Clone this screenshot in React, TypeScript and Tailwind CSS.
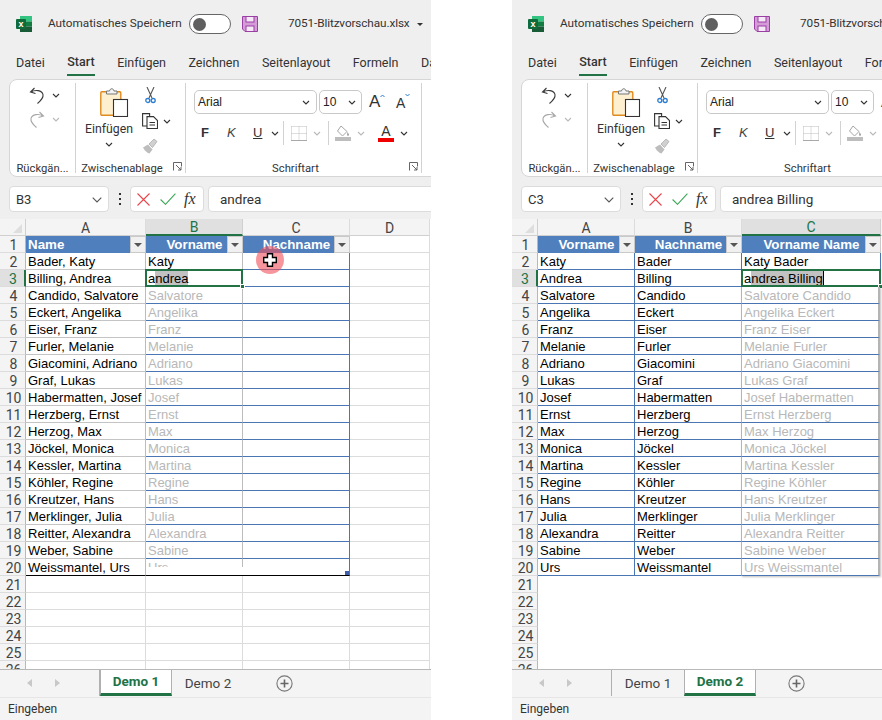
import type { ReactNode } from 'react';

const ui = "font-['Roboto','Noto_Sans',sans-serif]";
const arial = "font-['Liberation_Sans',Arial,sans-serif]";

const people = [
  ['Katy', 'Bader'],
  ['Andrea', 'Billing'],
  ['Salvatore', 'Candido'],
  ['Angelika', 'Eckert'],
  ['Franz', 'Eiser'],
  ['Melanie', 'Furler'],
  ['Adriano', 'Giacomini'],
  ['Lukas', 'Graf'],
  ['Josef', 'Habermatten'],
  ['Ernst', 'Herzberg'],
  ['Max', 'Herzog'],
  ['Monica', 'Jöckel'],
  ['Martina', 'Kessler'],
  ['Regine', 'Köhler'],
  ['Hans', 'Kreutzer'],
  ['Julia', 'Merklinger'],
  ['Alexandra', 'Reitter'],
  ['Sabine', 'Weber'],
  ['Urs', 'Weissmantel'],
];

const emptyRows = [21, 22, 23, 24, 25, 26];

function Chevron({ muted = false, className = '' }: { muted?: boolean; className?: string }) {
  return (
    <svg width="8" height="5" viewBox="0 0 8 5" className={`shrink-0 ${className}`}>
      <path d="M1 1l3 3 3-3" fill="none" stroke={muted ? '#b9b9b9' : '#333'} strokeWidth="1.1" />
    </svg>
  );
}

function ExcelLogo() {
  return (
    <svg width="16" height="16" viewBox="0 0 16 16" className="shrink-0">
      <rect x="4" y="0" width="12" height="5.5" fill="#33c481" />
      <rect x="4" y="5.5" width="6" height="5" fill="#21a366" />
      <rect x="10" y="5.5" width="6" height="5" fill="#107c41" />
      <rect x="4" y="10.5" width="12" height="5.5" fill="#185c37" />
      <rect x="0" y="3" width="10" height="10" rx="1" fill="#0f6b3a" />
      <text x="5" y="11" textAnchor="middle" fontSize="9" fontWeight="700" fill="#fff" fontFamily="Liberation Sans">x</text>
    </svg>
  );
}

function SaveIcon() {
  return (
    <svg width="16" height="16" viewBox="0 0 16 16" className="shrink-0">
      <path d="M.5.5h15v15H3l-2.5-2.5z" fill="#d59ad8" stroke="#9a3fa3" />
      <rect x="4" y=".5" width="8" height="5.5" fill="#f6e9f7" stroke="#9a3fa3" />
      <rect x="4" y="10" width="8" height="5.5" fill="#f6e9f7" stroke="#9a3fa3" />
    </svg>
  );
}

function UndoIcon({ muted = false, flip = false }: { muted?: boolean; flip?: boolean }) {
  const c = muted ? '#a8a8a8' : '#3a3a3a';
  return (
    <svg width="16" height="17" viewBox="0 0 16 17" className={flip ? 'shrink-0 -scale-x-100' : 'shrink-0'}>
      <path d="M5.5 1L1.5 5l5 1.5M2 5c4-2.5 11-2 12 2.5.6 3-2 6-5.5 9" fill="none" stroke={c} strokeWidth="1.1" />
    </svg>
  );
}

function ClipboardIcon() {
  return (
    <svg width="29" height="30" viewBox="0 0 29 30" className="shrink-0">
      <rect x=".8" y="4.8" width="20" height="23.5" rx="1" fill="#fdf0d0" stroke="#e08a1e" strokeWidth="1.4" />
      <path d="M6.5 7V4h3c.5-3 4-3 4.5 0h3v3z" fill="#f3f3f3" stroke="#777" strokeWidth="1" />
      <rect x="13.5" y="12.5" width="14" height="17" fill="#fff" stroke="#333" strokeWidth="1.1" />
    </svg>
  );
}

function ScissorsIcon() {
  return (
    <svg width="11" height="17" viewBox="0 0 11 17" className="shrink-0">
      <path d="M2 0l5 11M9 0L4 11" fill="none" stroke="#555" strokeWidth="1.1" />
      <circle cx="2.8" cy="13.5" r="2" fill="none" stroke="#2b7cd3" strokeWidth="1.3" />
      <circle cx="8.2" cy="13.5" r="2" fill="none" stroke="#2b7cd3" strokeWidth="1.3" />
    </svg>
  );
}

function CopyIcon() {
  return (
    <svg width="16" height="16" viewBox="0 0 16 16" className="shrink-0">
      <path d="M5 13H.6V.6h7V4" fill="none" stroke="#333" strokeWidth="1.1" />
      <path d="M5 3.6h6.5l4 4v8H5z" fill="#fff" stroke="#333" strokeWidth="1.1" />
      <path d="M7.5 9.5h5.5M7.5 12h5.5" stroke="#333" strokeWidth="1" />
    </svg>
  );
}

function BrushIcon() {
  return (
    <svg width="16" height="16" viewBox="0 0 16 16" className="shrink-0">
      <path d="M1 9.5l5-3 4.5 5-3 4c-2-.2-5-3-6.5-6z" fill="#bdbdbd" />
      <path d="M7 6l5-5 3 2.5-4.5 6z" fill="#d0d0d0" stroke="#a5a5a5" strokeWidth=".7" />
    </svg>
  );
}

function Launcher() {
  return (
    <svg width="9" height="9" viewBox="0 0 9 9" className="shrink-0">
      <path d="M.5 8.5v-8h8v4M3 3l5 5M8 5v3H5" fill="none" stroke="#555" strokeWidth=".9" />
    </svg>
  );
}

function BorderIcon() {
  return (
    <svg width="16" height="15" viewBox="0 0 16 15" className="shrink-0">
      <path d="M.5.5h15M.5 7.5h15M.5.5v14M8 .5v14M15.5.5v14" stroke="#bdbdbd" strokeDasharray="1 1" fill="none" />
      <path d="M0 14.5h16" stroke="#a9a9a9" />
    </svg>
  );
}

function FillIcon() {
  return (
    <svg width="16" height="16" viewBox="0 0 16 16" className="shrink-0">
      <path d="M6 1l6 5.5-4.5 4.5-5-5z" fill="#fff" stroke="#a5a5a5" />
      <path d="M12.5 7c1 1.3 1.8 2.2 1.5 3.2-.4 1-2 .8-2-.4 0-.8.3-1.8.5-2.8z" fill="#a5a5a5" />
      <rect x="0" y="12" width="16" height="4" fill="#bdbdbd" />
    </svg>
  );
}

function SizeA({ up }: { up: boolean }) {
  return (
    <div className="flex items-start shrink-0">
      <span className={`${arial} ${up ? 'text-[17px]' : 'text-[14px] mt-[2px]'} leading-[20px] text-[#333]`}>A</span>
      <svg width="5" height="4" viewBox="0 0 5 4" className="mt-[2px]">
        <path d={up ? 'M.5 3l2-2 2 2' : 'M.5 1l2 2 2-2'} fill="none" stroke="#2b7cd3" />
      </svg>
    </div>
  );
}

function GroupLabel({ text, className = '', launcher = false }: { text: string; className?: string; launcher?: boolean }) {
  return (
    <div className={`h-[18px] pt-[9px] flex items-center justify-center relative text-[11.25px] leading-[10px] text-[#333] shrink-0 ${className}`}>
      <span>{text}</span>
      {launcher && (
        <span className="absolute right-[3px] top-[7px]">
          <Launcher />
        </span>
      )}
    </div>
  );
}

function Ribbon() {
  return (
    <div className="h-[98px] ml-[9px] w-[600px] shrink-0 bg-white border border-[#d6d6d6] rounded-l-[8px] py-[3px] flex">
      <div className="w-[66px] shrink-0 border-r border-[#d2d2d2] flex flex-col">
        <div className="flex-1 pl-[19px] pt-[3px]">
          <div className="flex items-center gap-[7px] h-[18px]">
            <UndoIcon />
            <Chevron />
          </div>
          <div className="flex items-center gap-[7px] h-[18px] mt-[6px]">
            <UndoIcon muted flip />
            <Chevron muted />
          </div>
        </div>
        <GroupLabel text="Rückgän..." />
      </div>

      <div className="w-[110px] shrink-0 border-r border-[#d2d2d2] flex flex-col">
        <div className="flex-1 flex pl-[9px] pt-[4px]">
          <div className="w-[48px] flex flex-col items-center shrink-0">
            <div className="ml-[10px]">
              <ClipboardIcon />
            </div>
            <span className="text-[12.25px] leading-[16px] mt-[4px] text-[#333]">Einfügen</span>
            <Chevron className="mt-[5px]" />
          </div>
          <div className="ml-[9px] flex flex-col gap-[9px]">
            <div className="pl-[3px]">
              <ScissorsIcon />
            </div>
            <div className="flex items-center gap-[5px]">
              <CopyIcon />
              <Chevron />
            </div>
            <BrushIcon />
          </div>
        </div>
        <GroupLabel text="Zwischenablage" className="pr-[17px]" launcher />
      </div>

      <div className="w-[236px] shrink-0 border-r border-[#d2d2d2] flex flex-col">
        <div className="flex-1 pl-[8px] pt-[7px]">
          <div className="flex items-center">
            <div className={`w-[123px] h-[24px] border border-[#c9c9c9] rounded-[5px] flex items-center justify-between pl-[3px] pr-[6px] text-[12px] text-[#222] ${arial}`}>
              Arial
              <Chevron />
            </div>
            <div className={`w-[43px] h-[24px] ml-[2px] border border-[#c9c9c9] rounded-[5px] flex items-center justify-between pl-[3px] pr-[5px] text-[12px] text-[#222] ${arial}`}>
              10
              <Chevron />
            </div>
            <div className="ml-[7px] w-[27px]">
              <SizeA up />
            </div>
            <div className="w-[20px]">
              <SizeA up={false} />
            </div>
          </div>
          <div className="flex items-center h-[24px] mt-[7px] pl-[7px]">
            <span className={`w-[26px] text-[13px] font-bold text-[#333] ${arial}`}>F</span>
            <span className={`w-[26px] text-[13px] italic text-[#444] ${arial}`}>K</span>
            <span className={`w-[18px] text-[13px] underline text-[#333] ${arial}`}>U</span>
            <Chevron />
            <span className="w-px h-[24px] bg-[#d2d2d2] ml-[4px] mr-[7px]" />
            <BorderIcon />
            <Chevron muted className="ml-[6px]" />
            <span className="w-px h-[24px] bg-[#d2d2d2] ml-[7px] mr-[6px]" />
            <FillIcon />
            <Chevron muted className="ml-[6px]" />
            <div className="ml-[13px] w-[16px] flex flex-col items-center shrink-0">
              <span className={`text-[14px] leading-[13px] text-[#333] ${arial}`}>A</span>
              <span className="w-[16px] h-[4px] bg-[#f00000]" />
            </div>
            <Chevron className="ml-[6px]" />
          </div>
        </div>
        <GroupLabel text="Schriftart" className="pr-[16px]" launcher />
      </div>
    </div>
  );
}

function FormulaBar({ cell, formula }: { cell: string; formula: string }) {
  return (
    <div className="h-[26px] mt-[9px] mb-[7px] ml-[9px] flex items-stretch shrink-0 w-[700px]">
      <div className="w-[100px] bg-white border border-[#dcdcdc] rounded-[4px] flex items-center justify-between pl-[6px] pr-[6px] pt-[1px] text-[13px] text-[#333]">
        {cell}
        <svg width="10" height="6" viewBox="0 0 10 6">
          <path d="M.7.7L5 5 9.3.7" fill="none" stroke="#555" strokeWidth="1.1" />
        </svg>
      </div>
      <div className="w-[21px] flex flex-col items-center justify-center gap-[3px]">
        <span className="w-[2px] h-[2px] bg-[#333]" />
        <span className="w-[2px] h-[2px] bg-[#333]" />
        <span className="w-[2px] h-[2px] bg-[#333]" />
      </div>
      <div className="w-[74px] bg-white border border-[#dcdcdc] rounded-[4px] flex items-center pl-[6px]">
        <svg width="13" height="13" viewBox="0 0 13 13" className="shrink-0">
          <path d="M.5.5l12 12M12.5.5l-12 12" stroke="#e8474c" strokeWidth="1.1" />
        </svg>
        <svg width="16" height="12" viewBox="0 0 16 12" className="ml-[10px] shrink-0">
          <path d="M.6 6.5L5.5 11.3 15.4.6" fill="none" stroke="#3aa655" strokeWidth="1.1" />
        </svg>
        <span className="ml-[8px] font-['Liberation_Serif',serif] italic text-[16px] text-[#333]">fx</span>
      </div>
      <div className="flex-1 ml-[4px] bg-white border border-[#dcdcdc] rounded-[4px] flex items-center pl-[11px] pt-[1px] text-[13.5px] text-[#333]">
        {formula}
      </div>
    </div>
  );
}

function FilterButton() {
  return (
    <span className="absolute right-0 top-0 w-[16px] h-[17px] bg-[#f0f0f0] border border-[#c9c9c9] flex items-center justify-center">
      <span className="w-0 h-0 border-x-[4px] border-x-transparent border-t-[4px] border-t-[#555]" />
    </span>
  );
}

function ColHead({ label, width, active = false }: { label: string; width: string; active?: boolean }) {
  return (
    <div
      className={`${width} shrink-0 flex items-center justify-center pt-[1px] text-[14px] leading-none border-r ${
        active
          ? 'bg-[#e0e0e0] text-[#217346] border-[#d0d0d0] border-b-2 border-b-[#217346]'
          : 'bg-[#f4f4f4] text-[#444] border-[#dcdcdc] border-b border-b-[#d0d0d0]'
      }`}
    >
      {label}
    </div>
  );
}

function RowHead({ n, active = false }: { n: number; active?: boolean }) {
  return (
    <div
      className={`w-[26px] shrink-0 flex items-center justify-center pl-[2px] pt-[1px] text-[14px] leading-none border-b border-[#dcdcdc] ${
        active
          ? 'bg-[#e0e0e0] text-[#217346] border-r-2 border-r-[#217346]'
          : 'bg-[#f4f4f4] text-[#444] border-r border-r-[#b8b8b8]'
      }`}
    >
      {n}
    </div>
  );
}

function Cell({ className, tone = 'text-black', children }: { className: string; tone?: string; children?: ReactNode }) {
  return (
    <div className={`relative shrink-0 px-[2px] leading-[18px] text-[13px] whitespace-nowrap ${tone} ${arial} ${className}`}>
      {children}
    </div>
  );
}

function HeaderCell({ className, children, filter = true }: { className: string; children: ReactNode; filter?: boolean }) {
  return (
    <div className={`relative shrink-0 bg-[#4f7fbd] text-white font-bold text-[13.33px] leading-[17px] ${arial} ${className}`}>
      {children}
      {filter && <FilterButton />}
    </div>
  );
}

function Corner() {
  return (
    <div className="w-[26px] shrink-0 bg-[#f4f4f4] border-r border-b border-[#d0d0d0] flex items-end justify-end pr-[3px] pb-[2px]">
      <span className="w-0 h-0 border-l-[9px] border-l-transparent border-b-[9px] border-b-[#dedede]" />
    </div>
  );
}

function SelectedEdit({ text, caret = false }: { text: string; caret?: boolean }) {
  return (
    <>
      {text[0]}
      <span className="bg-[#c2c2c2]">{text.slice(1)}</span>
      {caret && <span className="inline-block w-px h-[15px] bg-black align-top mt-[1px]" />}
      <span className="absolute -left-px -top-px -right-px -bottom-px border-2 border-[#217346]" />
      <span className="absolute -right-[3px] -bottom-[3px] w-[5px] h-[5px] bg-[#217346] border border-white" />
    </>
  );
}

function LeftSheet() {
  const ghost = 'text-[#b8b8b8]';
  return (
    <div className="relative h-[450px] w-[700px] bg-white overflow-hidden shrink-0">
      <div className="flex h-[17px]">
        <Corner />
        <ColHead label="A" width="w-[120px]" />
        <ColHead label="B" width="w-[97px]" active />
        <ColHead label="C" width="w-[107px]" />
        <ColHead label="D" width="w-[80px]" />
      </div>
      <div className="flex h-[17px]">
        <RowHead n={1} />
        <HeaderCell className="w-[120px] pl-[2px]">Name</HeaderCell>
        <HeaderCell className="w-[97px] text-center">Vorname</HeaderCell>
        <HeaderCell className="w-[107px] text-center">Nachname</HeaderCell>
        <Cell className="w-[80px] border-r border-b border-[#dcdcdc]" />
      </div>
      {people.map(([first, last], i) => {
        const row = i + 2;
        const isLast = row === 20;
        const aBottom = isLast ? 'border-b-black' : 'border-b-[#c4c4c4]';
        const bBottom = isLast ? 'border-b-black' : 'border-b-[#4a76b4]';
        return (
          <div key={row} className="flex h-[17px]">
            <RowHead n={row} active={row === 3} />
            <Cell className={`w-[120px] border-r border-b border-r-[#bcbcbc] ${aBottom}`}>
              {last}, {first}
            </Cell>
            {row === 2 ? (
              <Cell className="w-[97px] border-r border-b border-r-[#bcbcbc] border-b-[#bcbcbc]">Katy</Cell>
            ) : row === 3 ? (
              <Cell className="w-[97px] z-10 border-r border-b border-r-[#bcbcbc] border-b-[#4a76b4]">
                <SelectedEdit text="andrea" />
              </Cell>
            ) : isLast ? (
              <Cell tone={ghost} className={`w-[97px] border-b ${bBottom}`}>
                <span className="block h-[8px] overflow-hidden">Urs</span>
                <span className="absolute right-0 top-0 w-px h-[8px] bg-[#bcbcbc]" />
              </Cell>
            ) : (
              <Cell tone={ghost} className={`w-[97px] border-r border-b border-r-[#bcbcbc] ${bBottom}`}>
                {first}
              </Cell>
            )}
            <Cell className={`w-[107px] border-r border-b border-r-[#4a76b4] ${bBottom}`}>
              {isLast && <span className="absolute right-0 bottom-0 w-[4px] h-[4px] bg-[#3f5fae]" />}
            </Cell>
            <Cell className="w-[80px] border-r border-b border-[#dcdcdc]" />
          </div>
        );
      })}
      {emptyRows.map((row) => (
        <div key={row} className="flex h-[17px]">
          <RowHead n={row} />
          <Cell className="w-[120px] border-r border-b border-[#dcdcdc]" />
          <Cell className="w-[97px] border-r border-b border-[#dcdcdc]" />
          <Cell className="w-[107px] border-r border-b border-[#dcdcdc]" />
          <Cell className="w-[80px] border-r border-b border-[#dcdcdc]" />
        </div>
      ))}
      <span className="absolute left-[256px] top-[27px] w-[28px] h-[28px] rounded-full bg-[#f0505a]/60 flex items-center justify-center">
        <svg width="14" height="14" viewBox="0 0 14 14">
          <path d="M4.5.7h5v3.8h3.8v5H9.5v3.8h-5V9.5H.7v-5h3.8z" fill="#fff" stroke="#000" strokeWidth="1.4" />
        </svg>
      </span>
    </div>
  );
}

function RightSheet() {
  const blue = 'border-[#4a76b4]';
  return (
    <div className="relative h-[450px] w-[700px] bg-white overflow-hidden shrink-0">
      <div className="flex h-[17px]">
        <Corner />
        <ColHead label="A" width="w-[97px]" />
        <ColHead label="B" width="w-[107px]" />
        <ColHead label="C" width="w-[139px]" active />
        <ColHead label="D" width="w-[80px]" />
      </div>
      <div className="flex h-[17px]">
        <RowHead n={1} />
        <HeaderCell className="w-[97px] text-center">Vorname</HeaderCell>
        <HeaderCell className="w-[107px] text-center">Nachname</HeaderCell>
        <HeaderCell className="w-[139px] text-center">Vorname Name</HeaderCell>
      </div>
      {people.map(([first, last], i) => {
        const row = i + 2;
        const ghost = row > 3;
        return (
          <div key={row} className="flex h-[17px]">
            <RowHead n={row} active={row === 3} />
            <Cell className={`w-[97px] border-r border-b ${blue}`}>{first}</Cell>
            <Cell className={`w-[107px] border-r border-b ${blue}`}>{last}</Cell>
            {row === 2 && <Cell className={`w-[139px] border-r border-b ${blue}`}>Katy Bader</Cell>}
            {row === 3 && (
              <Cell className={`w-[139px] z-10 border-r border-b ${blue}`}>
                <SelectedEdit text="andrea Billing" caret />
              </Cell>
            )}
            {ghost && (
              <Cell
                tone="text-[#b8b8b8]"
                className="w-[139px] z-10 bg-white border-b border-b-[#4a76b4] border-l border-l-[#b4b4b4] border-r-2 border-r-[#b4b4b4] -ml-px shadow-[1px_1px_2px_rgba(0,0,0,0.25)]"
              >
                {first} {last}
              </Cell>
            )}
          </div>
        );
      })}
      {emptyRows.map((row) => (
        <div key={row} className="flex h-[17px]">
          <RowHead n={row} />
        </div>
      ))}
    </div>
  );
}

function SheetTabs({ active }: { active: 1 | 2 }) {
  const tabClass = (on: boolean) =>
    `w-[72px] h-[26px] flex items-center justify-center text-[13.5px] shrink-0 border-[#b0b0b0] ${
      on ? 'bg-white font-bold text-[#217346] border-x border-b-[3px] border-b-[#217346]' : 'text-[#444]'
    }`;
  return (
    <div className="h-[28px] bg-[#f4f4f4] border-t border-[#b8b8b8] flex items-start shrink-0">
      <div className="w-[100px] h-[26px] flex items-center gap-[23px] pl-[27px] shrink-0 border-r border-[#b0b0b0]">
        <span className="w-0 h-0 border-y-[4px] border-y-transparent border-r-[5px] border-r-[#c8c8c8]" />
        <span className="w-0 h-0 border-y-[4px] border-y-transparent border-l-[5px] border-l-[#c8c8c8]" />
      </div>
      <div className={tabClass(active === 1)}>Demo 1</div>
      <div className={tabClass(active === 2)}>Demo 2</div>
      <svg width="17" height="17" viewBox="0 0 17 17" className="ml-[32px] mt-[5px] shrink-0">
        <circle cx="8.5" cy="8.5" r="7.6" fill="none" stroke="#777" strokeWidth="1.1" />
        <path d="M4.5 8.5h8M8.5 4.5v8" stroke="#666" strokeWidth="1.6" />
      </svg>
    </div>
  );
}

function ExcelWindow({
  width,
  cell,
  formula,
  active,
  children,
}: {
  width: string;
  cell: string;
  formula: string;
  active: 1 | 2;
  children: ReactNode;
}) {
  const tabs = ['Datei', 'Start', 'Einfügen', 'Zeichnen', 'Seitenlayout', 'Formeln', 'Daten'];
  return (
    <div className={`${width} h-[720px] shrink-0 bg-[#efefef] overflow-hidden flex flex-col ${ui}`}>
      <div className="h-[48px] shrink-0 w-[600px] flex items-center pl-[16px] text-[11.75px] text-[#333]">
        <ExcelLogo />
        <span className="ml-[16px] w-[134px] shrink-0 whitespace-nowrap">Automatisches Speichern</span>
        <div className="ml-[7px] w-[42px] h-[20px] rounded-full border border-[#666] bg-white flex items-center pl-[3px] shrink-0">
          <span className="w-[13px] h-[13px] rounded-full bg-[#5f5f5f]" />
        </div>
        <span className="ml-[11px]">
          <SaveIcon />
        </span>
        <span className="ml-[30px] w-[121px] shrink-0 whitespace-nowrap tracking-[-0.1px]">7051-Blitzvorschau.xlsx</span>
        <span className="ml-[8px] w-0 h-0 border-x-[3px] border-x-transparent border-t-[3px] border-t-[#333]" />
      </div>
      <div className="h-[31px] shrink-0 w-[600px] flex gap-[22.5px] pl-[16px] pt-[3px] text-[12.5px] text-[#333] whitespace-nowrap">
        {tabs.map((t) => (
          <div
            key={t}
            className={`h-[25px] flex items-center ${t === 'Start' ? 'font-medium border-b-2 border-[#217346]' : ''}`}
          >
            {t}
          </div>
        ))}
      </div>
      <Ribbon />
      <FormulaBar cell={cell} formula={formula} />
      {children}
      <SheetTabs active={active} />
      <div className="h-[23px] shrink-0 border-t border-[#e6e6e6] bg-[#f4f4f4] flex items-center pl-[8px] text-[12px] text-[#333]">
        Eingeben
      </div>
    </div>
  );
}

export default function App() {
  return (
    <div className="w-[882px] h-[720px] bg-white flex overflow-hidden">
      <ExcelWindow width="w-[431px]" cell="B3" formula="andrea" active={1}>
        <LeftSheet />
      </ExcelWindow>
      <div className="w-[81px] shrink-0" />
      <ExcelWindow width="w-[370px]" cell="C3" formula="andrea Billing" active={2}>
        <RightSheet />
      </ExcelWindow>
    </div>
  );
}
